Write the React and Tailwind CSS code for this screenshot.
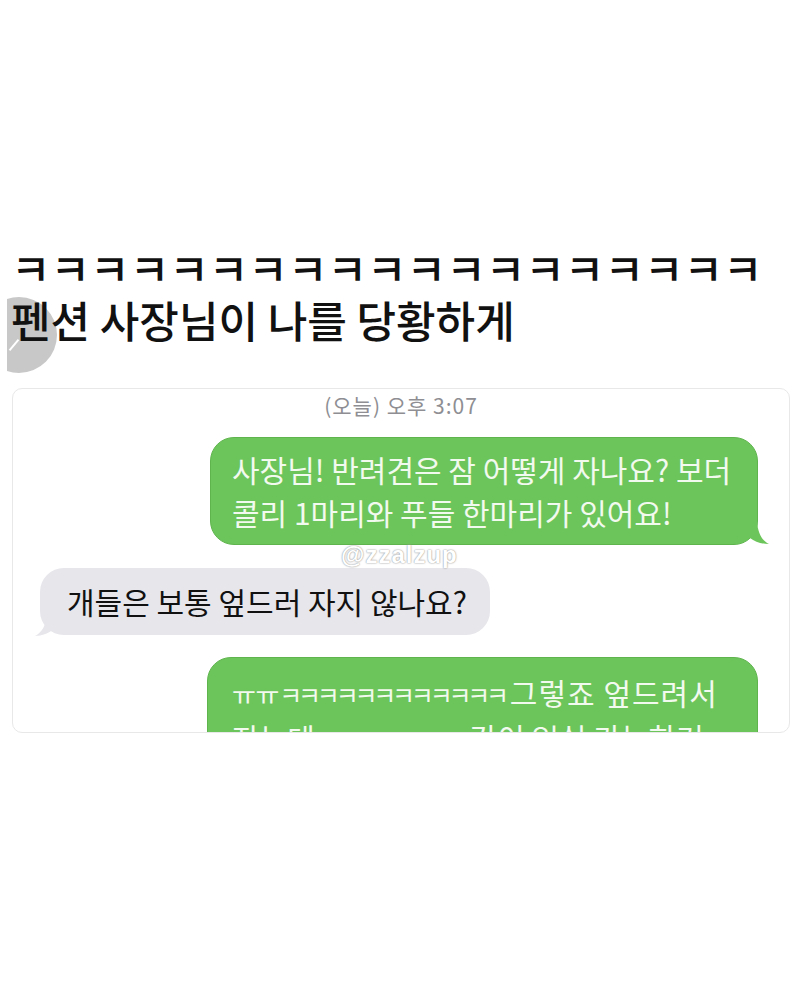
import React from "react";

function GreenTail() {
  return (
    <svg
      className="absolute right-[-13px] bottom-[-1px]"
      width="34"
      height="24"
      viewBox="0 0 34 24"
    >
      <path
        d="M0 23 C6 22 10 20 14 17 C19 21 26 23 33 23 C27 20 22 14 21 0 H0 Z"
        fill="#6cc55a"
      />
    </svg>
  );
}

function GrayTail() {
  return (
    <svg
      className="absolute left-[-6px] bottom-[-2px]"
      width="34"
      height="24"
      viewBox="0 0 34 24"
    >
      <path
        d="M34 22 C28 21 24 19 20 16 C15 20 8 23 1 23 C7 20 12 14 13 0 H34 Z"
        fill="#e6e6eb"
      />
    </svg>
  );
}

function Jamo({ text, kind }) {
  const cls =
    kind === "u"
      ? "text-[26px] tracking-[-0.3px]"
      : "text-[25px] tracking-[-4.2px]";
  return <span className={cls}>{text}</span>;
}

export default function App() {
  return (
    <div className="relative w-[800px] h-[1000px] bg-white overflow-hidden font-['Noto_Sans_CJK_KR',sans-serif]">
      {/* gray round thing at left edge */}
      <div className="absolute left-[7px] top-[297px] w-[50px] h-[76px] overflow-hidden">
        <div className="absolute left-[-26px] top-0 w-[76px] h-[76px] rounded-full bg-[#c8c8c8]" />
        <div className="absolute left-[6px] top-[41px] w-[2px] h-[14px] bg-white rotate-[40deg]" />
      </div>

      <div className="relative pt-[241px] pl-[11px] text-[43px] leading-[52px] text-[#111] font-medium">
        <div className="whitespace-nowrap">{"ㅋ".repeat(19)}</div>
        <div className="whitespace-nowrap">펜션 사장님이 나를 당황하게</div>
      </div>

      <div className="relative mt-[43px] ml-[12px] w-[778px] h-[345px] border border-[#e8e8e8] rounded-[10px] overflow-hidden bg-white flex flex-col">
        <div className="pt-[4px] text-center text-[21px] leading-[24px] text-[#8e8e93] tracking-[1px]">
          (오늘) 오후 3:07
        </div>

        <div className="relative self-end mr-[31px] mt-[20px] w-[548px] rounded-[24px] bg-[#6cc55a] border border-[#5fb44e] px-[21px] py-[10px] text-[30px] leading-[43px] text-[#f2f9ee] whitespace-nowrap">
          사장님! 반려견은 잠 어떻게 자나요? 보더
          <br />
          콜리 1마리와 푸들 한마리가 있어요!
          <GreenTail />
        </div>

        <div className="relative self-start ml-[27px] mt-[23px] w-[450px] rounded-[24px] bg-[#e6e6eb] px-[27px] py-[12px] text-[30px] leading-[43px] text-[#111] whitespace-nowrap">
          개들은 보통 엎드러 자지 않나요?
          <GrayTail />
        </div>

        <div className="relative self-end mr-[31px] mt-[22px] w-[551px] rounded-[24px] bg-[#6cc55a] border border-[#5fb44e] px-[24px] pt-[13px] text-[30px] leading-[43px] text-[#f2f9ee] whitespace-nowrap">
          <Jamo text="ㅠㅠ" kind="u" />
          <Jamo text={"ㅋ".repeat(12)} kind="k" />
          <span className="ml-[5px] tracking-[1px]">그렇죠 엎드려서</span>
          <br />
          자는데 <Jamo text={"ㅋ".repeat(5)} kind="k" /> <Jamo text="ㅠㅠ" kind="u" />
          <span>같이 입실 가능한거</span>
          <br />
          있나요?
        </div>

        <div className="absolute left-[328px] top-[154px] text-[24px] leading-[24px] font-bold tracking-[1px] text-white font-['Liberation_Sans',sans-serif] [text-shadow:0_0_2px_#9a9a9a,0_0_1px_#b0b0b0]">
          @zzalzup
        </div>
      </div>
    </div>
  );
}
